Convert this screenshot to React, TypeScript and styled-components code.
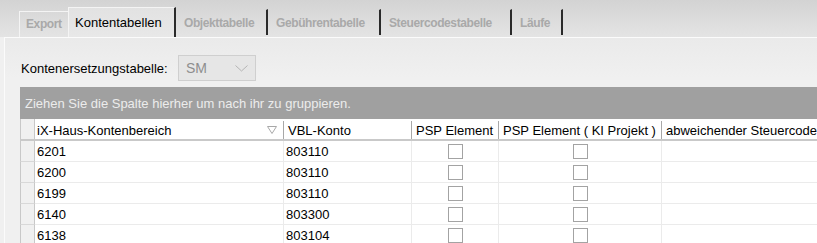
import React from "react";
import styled, { createGlobalStyle } from "styled-components";

const GlobalStyle = createGlobalStyle`
    html, body {
        margin: 0;
        padding: 0;
        background: #f0f0f0;
    }
    body {
        font-family: "Liberation Sans", Arial, sans-serif;
        font-size: 13px;
        color: #000;
    }
`;

type TabDef = { label: string; width: number; active?: boolean; first?: boolean };

const tabs: TabDef[] = [
    { label: "Export", width: 49, first: true },
    { label: "Kontentabellen", width: 108, active: true },
    { label: "Objekttabelle", width: 90 },
    { label: "Gebührentabelle", width: 111 },
    { label: "Steuercodestabelle", width: 129 },
    { label: "Läufe", width: 49 },
];

const rows = [
    { bereich: "6201", konto: "803110" },
    { bereich: "6200", konto: "803110" },
    { bereich: "6199", konto: "803110" },
    { bereich: "6140", konto: "803300" },
    { bereich: "6138", konto: "803104" },
];

// column widths: row indicator, Kontenbereich, VBL-Konto, PSP, PSP KI, Steuercode
const COLS = "15px 249px 128px 87px 163px 220px";

const FilterIcon = () => (
    <svg width="10" height="8" viewBox="0 0 10 8">
        <path d="M0.5 0.5 H9.5 L5 7.5 Z" fill="none" stroke="#a8a8a8" strokeWidth="1" />
    </svg>
);

const Chevron = () => (
    <svg width="13" height="7" viewBox="0 0 13 7">
        <path d="M0.5 0.5 L6.5 6 L12.5 0.5" fill="none" stroke="#b4b4b4" strokeWidth="1" />
    </svg>
);

export default function App() {
    return (
        <>
            <GlobalStyle />
            <Window>
                <TabStrip>
                    {tabs.map((t) => (
                        <Tab key={t.label} $w={t.width} $active={t.active} $first={t.first}>
                            <TabLabel $active={t.active}>{t.label}</TabLabel>
                        </Tab>
                    ))}
                </TabStrip>
                <Panel>
                    <FieldRow>
                        <FieldLabel>Kontenersetzungstabelle:</FieldLabel>
                        <Combo>
                            <span>SM</span>
                            <Chevron />
                        </Combo>
                    </FieldRow>
                    <Grid>
                        <GroupPanel>Ziehen Sie die Spalte hierher um nach ihr zu gruppieren.</GroupPanel>
                        <HeaderRow>
                            <Indicator $header />
                            <HeaderCell $first>
                                <span>iX-Haus-Kontenbereich</span>
                                <FilterIcon />
                            </HeaderCell>
                            <HeaderCell>VBL-Konto</HeaderCell>
                            <HeaderCell>PSP Element</HeaderCell>
                            <HeaderCell>PSP Element ( KI Projekt )</HeaderCell>
                            <HeaderCell>abweichender Steuercode</HeaderCell>
                        </HeaderRow>
                        {rows.map((r, i) => (
                            <DataRow key={i}>
                                <Indicator />
                                <Cell>{r.bereich}</Cell>
                                <Cell>{r.konto}</Cell>
                                <Cell $center>
                                    <CheckBox />
                                </Cell>
                                <Cell $center>
                                    <CheckBox />
                                </Cell>
                                <Cell />
                            </DataRow>
                        ))}
                    </Grid>
                </Panel>
            </Window>
        </>
    );
}

const Window = styled.div`
    width: 817px;
    height: 243px;
    overflow: hidden;
    background: #f0f0f0;
`;

const TabStrip = styled.div`
    height: 37px;
    display: flex;
    align-items: flex-end;
    padding-left: 19px;
    box-sizing: border-box;
    background: linear-gradient(#d3d3d3, #e4e4e4);
`;

const Tab = styled.div<{ $w: number; $active?: boolean; $first?: boolean }>`
    width: ${(p) => p.$w}px;
    height: ${(p) => (p.$active ? 30 : p.$first ? 26 : 26)}px;
    box-sizing: border-box;
    display: flex;
    align-items: flex-start;
    padding-top: ${(p) => (p.$active ? 8 : p.$first ? 5 : 6)}px;
    padding-left: ${(p) => (p.$first ? 6 : p.$active ? 6 : 5)}px;
    background: ${(p) => (p.$active ? "linear-gradient(#e2e2e2, #e8e8e8)" : "transparent")};
    border-left: 1px solid ${(p) => (p.$first || p.$active ? "#f4f4f4" : "transparent")};
    border-top: 1px solid ${(p) => (p.$first || p.$active ? "#f4f4f4" : "transparent")};
    border-right: ${(p) => (p.$first ? "0" : "2px solid #2a2a2a")};
    margin-right: ${(p) => (p.$first ? 0 : 2)}px;
    margin-bottom: ${(p) => (p.$active || p.$first ? 0 : 2)}px;
`;

const TabLabel = styled.span<{ $active?: boolean }>`
    font-size: ${(p) => (p.$active ? 13 : 12)}px;
    line-height: 14px;
    font-weight: ${(p) => (p.$active ? 400 : 700)};
    letter-spacing: ${(p) => (p.$active ? 0 : -0.4)}px;
    color: ${(p) => (p.$active ? "#000" : "#a9a9a9")};
    white-space: nowrap;
`;

const Panel = styled.div`
    margin-left: 4px;
    height: 206px;
    border-left: 1px solid #fbfbfb;
    border-top: 1px solid #fbfbfb;
    background: linear-gradient(#eaeaea, #f0f0f0 40px);
    padding-top: 17px;
    box-sizing: border-box;
`;

const FieldRow = styled.div`
    display: flex;
    align-items: center;
    padding-left: 16px;
    height: 26px;
`;

const FieldLabel = styled.span`
    width: 157px;
    font-size: 13px;
    color: #000;
`;

const Combo = styled.div`
    width: 78px;
    height: 26px;
    box-sizing: border-box;
    border: 1px solid #cfcfcf;
    background: #e6e6e6;
    display: flex;
    align-items: center;
    justify-content: space-between;
    padding: 0 7px 0 7px;
    color: #8e8e8e;
    font-size: 14px;
`;

const Grid = styled.div`
    margin-top: 6px;
    margin-left: 15px;
    width: 900px;
`;

const GroupPanel = styled.div`
    height: 32px;
    background: #a0a0a0;
    color: #ececec;
    font-size: 13px;
    padding-left: 5px;
    display: flex;
    align-items: center;
`;

const HeaderRow = styled.div`
    display: grid;
    grid-template-columns: ${COLS};
    height: 22px;
    background: #fff;
    border-bottom: 2px solid #c9c9c9;
    box-sizing: border-box;
`;

const Indicator = styled.div<{ $header?: boolean }>`
    background: #f0f0f0;
    border-left: 1px solid #c8c8c8;
    border-right: 1px solid #c8c8c8;
    border-bottom: ${(p) => (p.$header ? "0" : "1px solid #d8d8d8")};
    box-sizing: border-box;
`;

const HeaderCell = styled.div<{ $first?: boolean }>`
    display: flex;
    align-items: center;
    justify-content: ${(p) => (p.$first ? "space-between" : "flex-start")};
    padding: 0 6px 0 ${(p) => (p.$first ? 2 : 4)}px;
    font-size: 13px;
    white-space: nowrap;
    overflow: hidden;
    border-right: 1px solid #a8a8a8;
    box-shadow: inset -2px 0 0 #fff;
    margin: 2px 0 0 0;
`;

const DataRow = styled.div`
    display: grid;
    grid-template-columns: ${COLS};
    height: 21px;
    background: #fff;
`;

const Cell = styled.div<{ $center?: boolean }>`
    display: flex;
    align-items: center;
    justify-content: ${(p) => (p.$center ? "center" : "flex-start")};
    padding-left: ${(p) => (p.$center ? 0 : 2)}px;
    padding-right: ${(p) => (p.$center ? 0 : 4)}px;
    font-size: 13px;
    border-right: 1px solid #ebebeb;
    border-bottom: 1px solid #ebebeb;
    box-sizing: border-box;
`;

const CheckBox = styled.div`
    width: 15px;
    height: 15px;
    box-sizing: border-box;
    border: 1px solid #a3a3a3;
    background: #fff;
`;
